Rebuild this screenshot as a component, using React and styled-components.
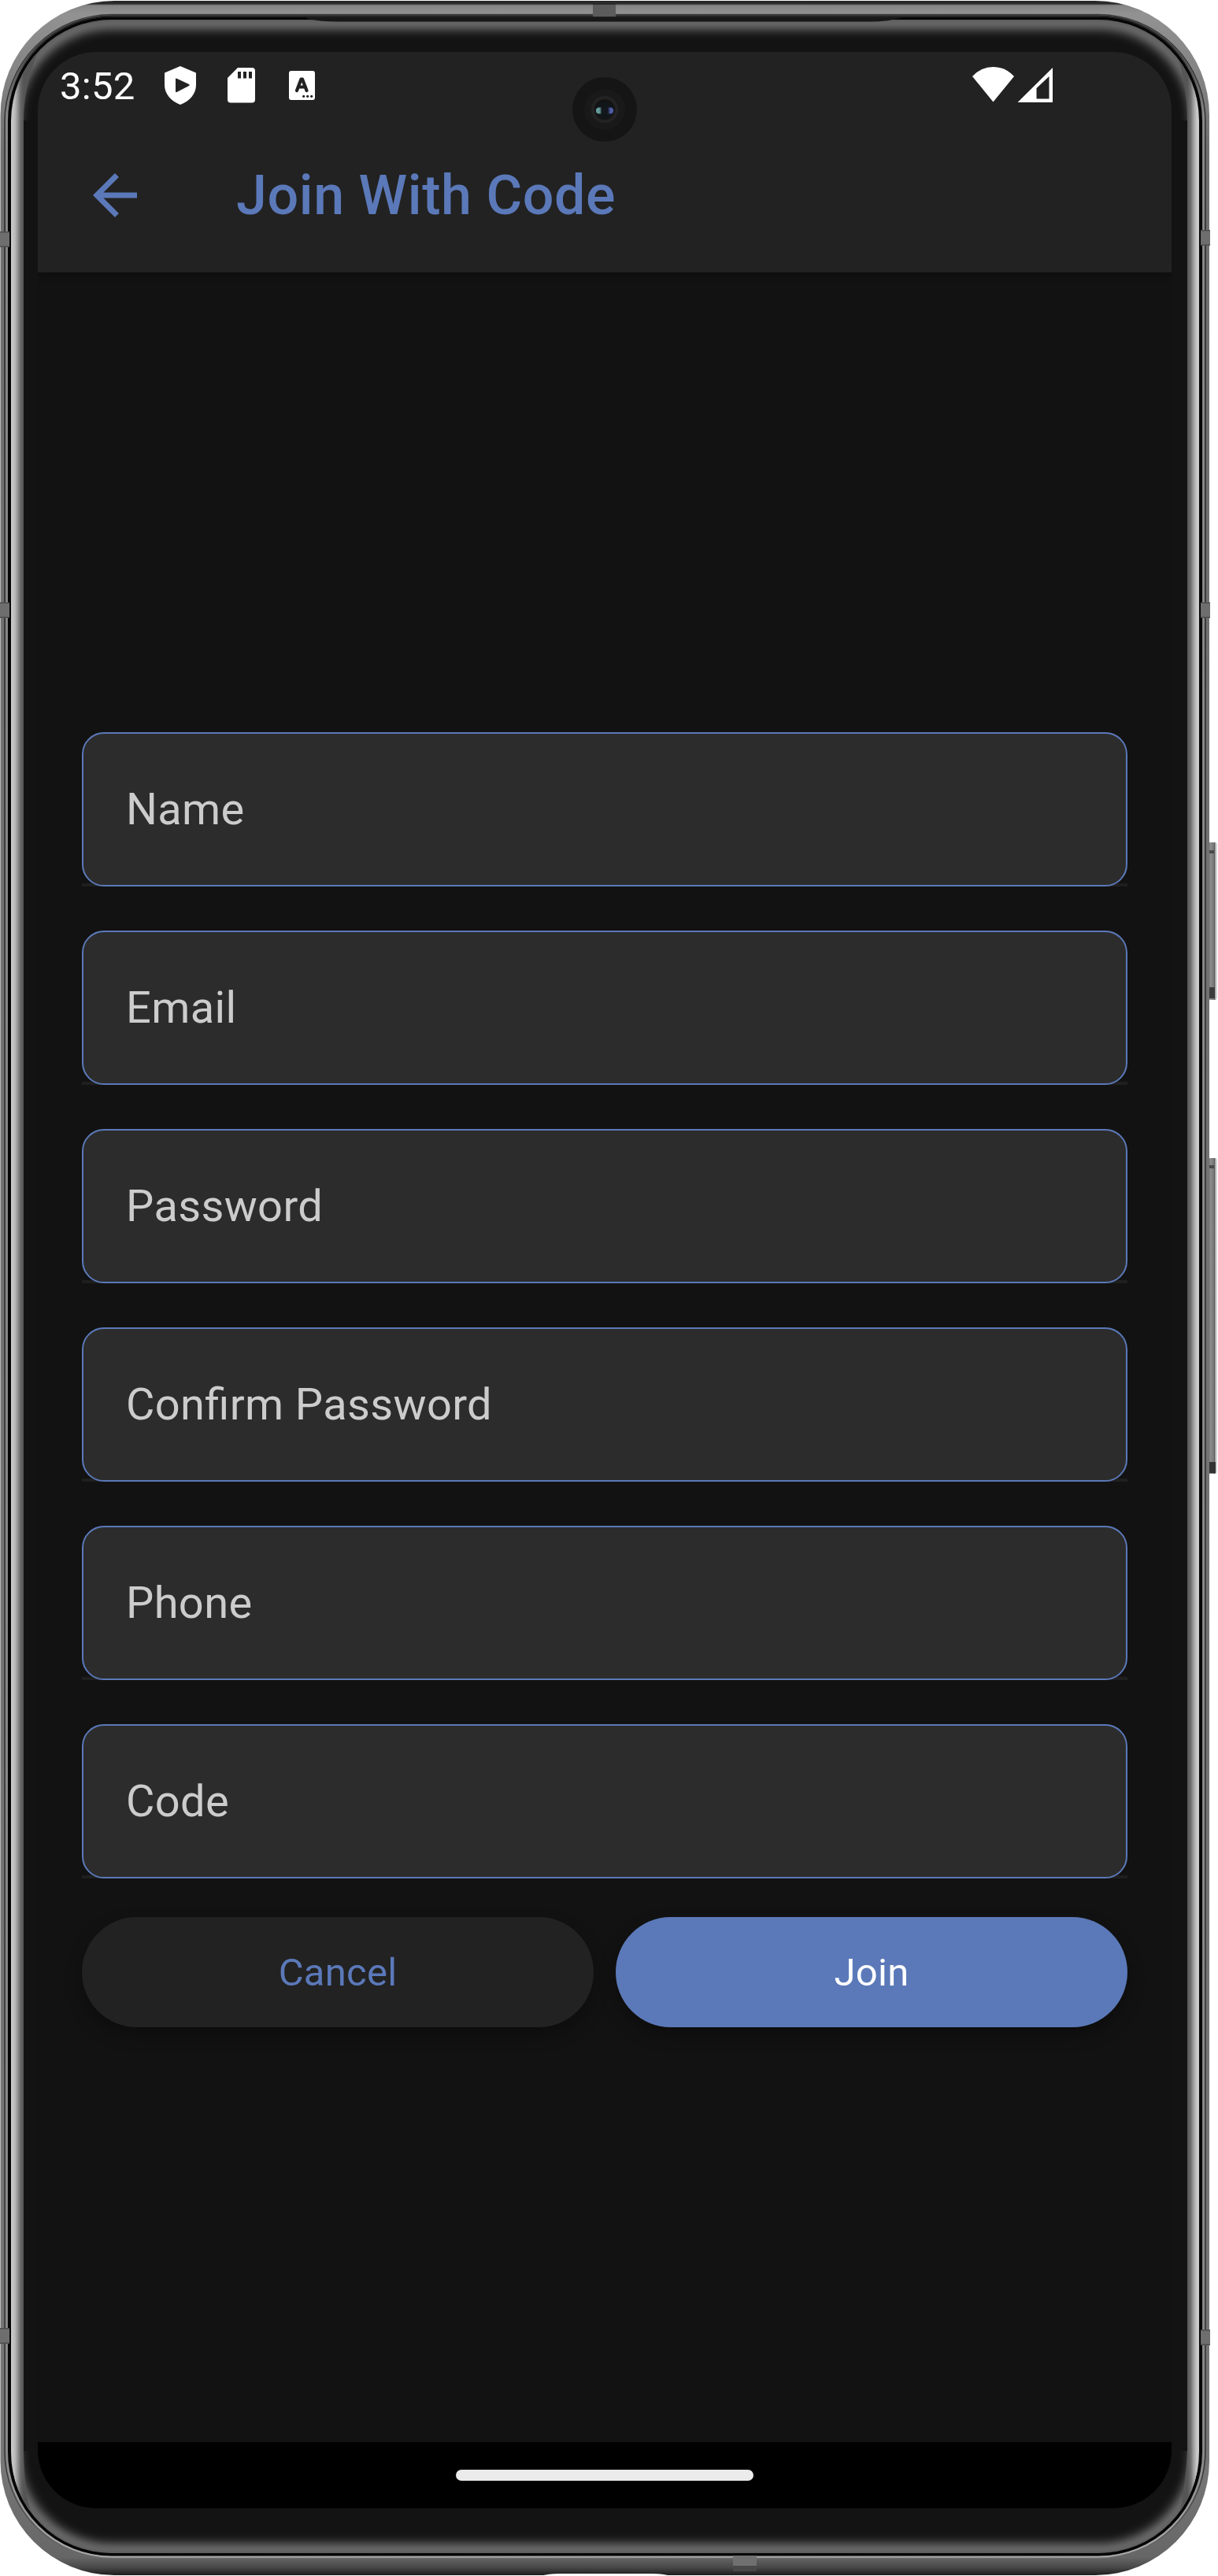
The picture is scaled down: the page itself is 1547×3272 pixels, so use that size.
import React from "react";
import styled, { createGlobalStyle } from "styled-components";

const Global = createGlobalStyle`
  * { box-sizing: border-box; }
  body { margin: 0; background: #fff; font-family: Roboto, "Liberation Sans", sans-serif; }
`;

const Stage = styled.div`
  position: relative;
  width: 1547px;
  height: 3272px;
  overflow: hidden;
  background: #fff;
`;

const Frame = styled.svg`
  position: absolute;
  inset: 0;
`;

const Screen = styled.main`
  position: relative;
  display: flex;
  flex-direction: column;
  width: 1440px;
  height: 3120px;
  margin: 66px 0 0 48px;
  border-radius: 74px;
  overflow: hidden;
  background: #121212;
`;

const Header = styled.header`
  flex: none;
  height: 280px;
  background: #222;
  box-shadow: 0 4px 10px rgba(0, 0, 0, 0.25);
`;

const StatusBar = styled.div`
  display: flex;
  align-items: center;
  height: 84px;
  padding: 0 149px 0 28px;
  color: #fff;
`;

const Clock = styled.span`
  width: 132px;
  padding-top: 3px;
  font-size: 49px;
  line-height: 58px;
  letter-spacing: 0.25px;
  white-space: nowrap;
`;

const StatusIcons = styled.svg`
  display: block;
  flex: none;
  margin-left: ${(p) => p.$left || "0"};
`;

const TitleBar = styled.div`
  display: flex;
  align-items: center;
  height: 196px;
  padding-left: 56px;
  color: #5b79b9;
`;

const Title = styled.h1`
  margin: 0 0 0 112px;
  font-size: 70px;
  font-weight: 500;
  line-height: 84px;
  letter-spacing: 0.56px;
`;

const Form = styled.form`
  flex: 1;
  display: flex;
  flex-direction: column;
  gap: 56px;
  padding: 584px 56px 0;
`;

const FieldShell = styled.label`
  display: block;
  height: 196px;
  background: linear-gradient(#1f1f1f, #1f1f1f) bottom / 100% 4px no-repeat;
`;

const Field = styled.input`
  display: block;
  width: 100%;
  height: 196px;
  padding: 0 54px;
  border: 2px solid #5b79b9;
  border-radius: 28px;
  outline: 0;
  background: #2c2c2c;
  color: #fff;
  font: 400 56px/66px Roboto, sans-serif;
  letter-spacing: 0.35px;
  font-feature-settings: "liga" 1;
  &::placeholder { color: #ccc; opacity: 1; }
`;

const Actions = styled.div`
  display: flex;
  gap: 28px;
  margin-top: -7px;
`;

const Button = styled.button`
  flex: 1;
  height: 140px;
  padding: 2px 0 0;
  border: 0;
  border-radius: 70px;
  background: ${(p) => (p.$primary ? "#5b79b9" : "#222")};
  color: ${(p) => (p.$primary ? "#fff" : "#5b79b9")};
  font: 400 49px/58px Roboto, sans-serif;
  letter-spacing: 0.25px;
  box-shadow: 0 10px 22px rgba(0, 0, 0, 0.3);
`;

const NavBar = styled.footer`
  flex: none;
  display: flex;
  align-items: center;
  justify-content: center;
  height: 84px;
  background: #000;
`;

const Handle = styled.div`
  width: 378px;
  height: 14px;
  border-radius: 7px;
  background: #ebebeb;
`;

function rr(x, y, width, height, rx) {
  return { x, y, width, height, rx };
}

function Antenna({ x, y }) {
  return (
    <g>
      <rect x={x} y={y} width="12" height="20" fill="#6e6e6e" />
      <rect x={x} y={y} width="12" height="1.5" fill="#4d4d4d" />
      <rect x={x} y={y + 18.5} width="12" height="1.5" fill="#4d4d4d" />
    </g>
  );
}

function DeviceFrame() {
  return (
    <Frame width="1547" height="3272" viewBox="0 0 1547 3272">
      <defs>
        <linearGradient id="metal" x1="0" x2="0" y1="0" y2="1">
          <stop offset="0" stopColor="#222" />
          <stop offset="0.0012" stopColor="#2e2e2e" />
          <stop offset="0.0018" stopColor="#858585" />
          <stop offset="0.005" stopColor="#929292" />
          <stop offset="0.06" stopColor="#707070" />
          <stop offset="0.96" stopColor="#767676" />
          <stop offset="0.993" stopColor="#666" />
          <stop offset="0.997" stopColor="#484848" />
          <stop offset="1" stopColor="#1c1c1c" />
        </linearGradient>
        <linearGradient id="ring" x1="0" x2="0" y1="18" y2="3250" gradientUnits="userSpaceOnUse">
          <stop offset="0" stopColor="#242424" />
          <stop offset="0.012" stopColor="#333" />
          <stop offset="0.04" stopColor="#8a8a8a" />
          <stop offset="0.96" stopColor="#8a8a8a" />
          <stop offset="1" stopColor="#aaa" />
        </linearGradient>
        <linearGradient id="groove" x1="0" x2="0" y1="18" y2="3250" gradientUnits="userSpaceOnUse">
          <stop offset="0" stopColor="#3a3a3a" />
          <stop offset="0.1" stopColor="#262626" />
          <stop offset="0.96" stopColor="#333" />
          <stop offset="1" stopColor="#6a6a6a" />
        </linearGradient>
        <linearGradient id="key" x1="0" x2="1" y1="0" y2="0">
          <stop offset="0" stopColor="#444" />
          <stop offset="0.25" stopColor="#8e8e8e" />
          <stop offset="0.65" stopColor="#777" />
          <stop offset="0.72" stopColor="#5a5a5a" />
          <stop offset="0.85" stopColor="#ccc" />
          <stop offset="1" stopColor="#ddd" />
        </linearGradient>
        <linearGradient id="rimL" x1="14" x2="30" y1="0" y2="0" gradientUnits="userSpaceOnUse">
          <stop offset="0" stopColor="#ccc" />
          <stop offset="0.3" stopColor="#bbb" />
          <stop offset="0.5" stopColor="#999" />
          <stop offset="0.75" stopColor="#696969" />
          <stop offset="1" stopColor="#555" />
        </linearGradient>
        <linearGradient id="rimR" x1="1508" x2="1523" y1="0" y2="0" gradientUnits="userSpaceOnUse">
          <stop offset="0" stopColor="#555" />
          <stop offset="0.3" stopColor="#707070" />
          <stop offset="0.5" stopColor="#999" />
          <stop offset="0.8" stopColor="#c8c8c8" />
          <stop offset="1" stopColor="#ccc" />
        </linearGradient>
        <filter id="soft" x="-5%" y="-5%" width="110%" height="110%">
          <feGaussianBlur stdDeviation="7" />
        </filter>
        <clipPath id="glassClip"><rect {...rr(14, 25, 1509, 3218, 128)} /></clipPath>
        <clipPath id="sideClip"><path d="M14 40H30V3230H14ZM1508 40H1523V3230H1508Z" /></clipPath>
      </defs>
      <rect {...rr(1534, 1070, 12, 200, 3)} fill="url(#key)" />
      <rect x="1535" y="1080" width="7" height="4" fill="#484848" />
      <rect x="1535" y="1254" width="8" height="14" fill="#3b3b3b" />
      <rect {...rr(1534, 1471, 12, 401, 3)} fill="url(#key)" />
      <rect x="1535" y="1480" width="7" height="4" fill="#484848" />
      <rect x="1535" y="1857" width="9" height="14" fill="#333" />
      <rect {...rr(0.5, 1, 1535.5, 3270, 145)} fill="url(#metal)" />
      <rect {...rr(6, 18.5, 1525, 3231, 136)} fill="none" stroke="url(#groove)" strokeWidth="1.5" />
      <rect {...rr(8.5, 20.5, 1520, 3227, 134)} fill="none" stroke="url(#ring)" strokeWidth="2.5" />
      <rect {...rr(12, 23.5, 1513, 3221, 130)} fill="none" stroke="#060606" strokeWidth="4" />
      <g clipPath="url(#glassClip)">
        <rect {...rr(14, 25, 1509, 3218, 128)} fill="#131313" />
        <rect {...rr(17, 29, 1503, 3210, 124)} fill="none" stroke="#868686" strokeWidth="14" filter="url(#soft)" />
        <path clipPath="url(#sideClip)" d="M30 130H44V3140H30Z" fill="#131313" />
        <path d="M30 153H48V3113H30ZM1488 153H1508V3113H1488Z" fill="#131313" />
        <path d="M14 153Q16 100 48 66Q30 112 30 153V3113Q31 3168 41 3201Q14 3160 14 3113Z" fill="url(#rimL)" />
        <path d="M1523 153Q1521 96 1489 52Q1508 100 1508 153V3113Q1506 3160 1495 3208Q1523 3160 1523 3113Z" fill="url(#rimR)" />
      </g>
      <path d="M390 24Q408 27.500 430 27.500H1105Q1128 27.500 1147 22H390Z" fill="#181818" />
      <rect x="753" y="2" width="29" height="19" fill="#5c5c5c" />
      <rect x="753" y="2" width="29" height="4" fill="#2b2b2b" />
      <rect x="931" y="3246" width="30" height="20" fill="#707070" />
      <rect x="931" y="3259" width="30" height="7" fill="#484848" />
      <path d="M686 3272Q697 3269 710 3269H829Q842 3269 852 3272Z" fill="#fff" />
      <Antenna x={0} y={294} />
      <Antenna x={1525} y={292} />
      <Antenna x={0} y={765} />
      <Antenna x={1525} y={765} />
      <Antenna x={0} y={2957} />
      <Antenna x={1525} y={2959} />
    </Frame>
  );
}

const Lens = styled.svg`
  position: absolute;
  left: 727px;
  top: 98px;
`;

function Camera() {
  return (
    <Lens width="82" height="82" viewBox="0 0 82 82">
      <defs>
        <radialGradient id="lens">
          <stop offset="0.6" stopColor="#101010" />
          <stop offset="0.85" stopColor="#262626" />
          <stop offset="1" stopColor="#191919" />
        </radialGradient>
        <linearGradient id="glint" x1="0" x2="1" y1="0" y2="0">
          <stop offset="0" stopColor="#6ea5a5" />
          <stop offset="0.22" stopColor="#5f9292" />
          <stop offset="0.34" stopColor="#14191c" />
          <stop offset="0.68" stopColor="#14171f" />
          <stop offset="0.82" stopColor="#4e5ba4" />
          <stop offset="1" stopColor="#5563b0" />
        </linearGradient>
      </defs>
      <circle cx="41" cy="41" r="41" fill="#151515" />
      <circle cx="41" cy="41" r="26" fill="#191919" />
      <circle cx="41" cy="41" r="18" fill="url(#lens)" />
      <circle cx="41" cy="42" r="11" fill="#11161a" />
      <rect x="30" y="38.500" width="22" height="8" rx="4" fill="url(#glint)" />
    </Lens>
  );
}

const FIELDS = [
  ["Name", "text"],
  ["Email", "email"],
  ["Password", "password"],
  ["Confirm Password", "password"],
  ["Phone", "tel"],
  ["Code", "text"],
];

export default function App() {
  return (
    <Stage>
      <Global />
      <DeviceFrame />
      <Screen>
        <Header>
          <StatusBar>
            <Clock>3:52</Clock>
            <StatusIcons width="202" height="50" viewBox="208 83 202 50">
              <path d="M229 84L249 92.500V108C249 119 241 128.500 229 133C217 128.500 209 119 209 108V92.500Z" fill="#fff" />
              <path d="M223 100.500Q223 99 224.500 99.700L240 107Q241.500 108 240 109L224.500 117Q223 117.500 223 116Z" fill="#222" />
              <path d="M302 86H320Q324 86 324 90V126.500Q324 130.500 320 130.500H293Q289 130.500 289 126.500V99Z" fill="#fff" />
              <path d="M302 91h4v8.500h-4zM309 91h4v8.500h-4zM316 91h4v8.500h-4z" fill="#222" />
              <rect x="367" y="90" width="33" height="37" rx="3" fill="#fff" />
              <path d="M377 115L382.500 100.500H384L389.500 115M379 110.500H388" fill="none" stroke="#222" strokeWidth="4.200" strokeLinecap="round" strokeLinejoin="round" />
              <g fill="#222"><circle cx="385.700" cy="122.300" r="1.600" /><circle cx="390.700" cy="122.300" r="1.600" /><circle cx="395.700" cy="122.300" r="1.600" /></g>
            </StatusIcons>
            <StatusIcons $left="auto" width="105" height="50" viewBox="1235 83 105 50">
              <path d="M1236 97Q1247 85 1262.500 85T1289 97L1262.500 129.500Z" fill="#fff" />
              <path fillRule="evenodd" d="M1338 86V130H1293.500ZM1333.500 97L1317.500 112V125.500H1333.500Z" fill="#fff" />
            </StatusIcons>
          </StatusBar>
          <TitleBar>
            <svg width="84" height="84" viewBox="0 0 24 24" fill="currentColor">
              <path d="M20 11H7.830l5.590-5.590L12 4l-8 8 8 8 1.410-1.410L7.830 13H20z" />
            </svg>
            <Title>Join With Code</Title>
          </TitleBar>
        </Header>
        <Form>
          {FIELDS.map(([label, type]) => (
            <FieldShell key={label}>
              <Field type={type} placeholder={label} />
            </FieldShell>
          ))}
          <Actions>
            <Button type="button">Cancel</Button>
            <Button type="button" $primary>Join</Button>
          </Actions>
        </Form>
        <NavBar><Handle /></NavBar>
      </Screen>
      <Camera />
    </Stage>
  );
}
